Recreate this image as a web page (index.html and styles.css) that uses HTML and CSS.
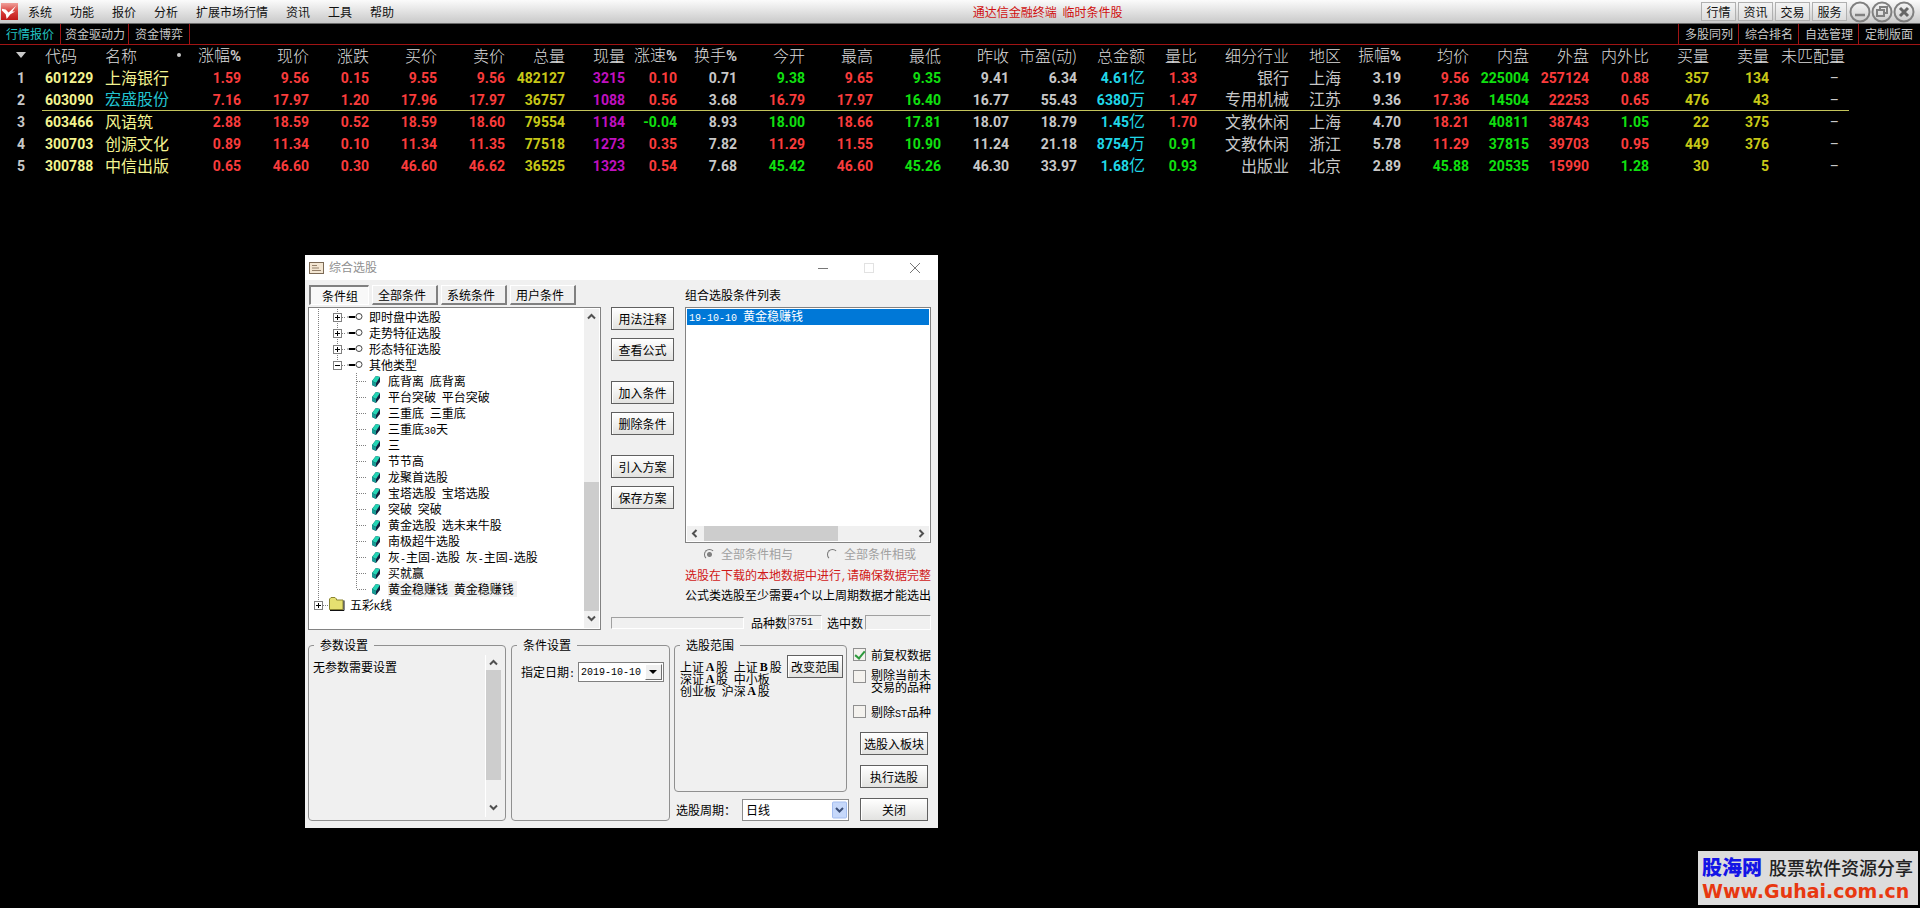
FILE: index.html
```
<!DOCTYPE html>
<html lang="zh-CN">
<head>
<meta charset="utf-8">
<title>通达信金融终端</title>
<link rel="stylesheet" href="styles.css">
</head>
<body>
<svg class="defs" aria-hidden="true">
  <defs>
    <g id="plus"><rect x="0.5" y="0.5" width="8" height="8" fill="#fff" stroke="#808080"/><path d="M2 4.5h5M4.5 2v5" stroke="#000"/></g>
    <g id="minus"><rect x="0.5" y="0.5" width="8" height="8" fill="#fff" stroke="#808080"/><path d="M2 4.5h5" stroke="#000"/></g>
    <g id="key"><path d="M0 4h10" stroke="#777"/><path d="M2 4h6" stroke="#000" stroke-width="2"/><circle cx="12" cy="3.500" r="3" fill="#fff" stroke="#444"/></g>
    <symbol id="branch" viewBox="0 0 61 16"><path d="M10.5 0v16M29.5 0v16" class="dots"/><path d="M34 8.5h4" class="dots"/><use href="#plus" x="25" y="4"/><use href="#key" x="39" y="4"/></symbol>
    <symbol id="branch-open" viewBox="0 0 61 16"><path d="M10.5 0v16M29.5 0v4" class="dots"/><path d="M34 8.5h4" class="dots"/><use href="#minus" x="25" y="4"/><use href="#key" x="39" y="4"/></symbol>
    <g id="book"><path d="M64 8l4-5 4 1v5l-4 5-4-2z" fill="#14203c"/><path d="M64 8l4-5 4 1-4 6z" fill="#24d4b4"/><path d="M64 8l4 2v4l-4-2z" fill="#189a94"/></g>
    <symbol id="leaf" viewBox="0 0 80 16"><path d="M10.5 0v16M48.5 0v16M49 8.5h10" class="dots"/><use href="#book"/></symbol>
    <symbol id="leaf-last" viewBox="0 0 80 16"><path d="M10.5 0v16M48.5 0v8M49 8.5h10" class="dots"/><use href="#book"/></symbol>
    <symbol id="root" viewBox="0 0 42 16"><path d="M10.5 0v4M15 8.5h6" class="dots"/><use href="#plus" x="6" y="4"/><path d="M21.500 4v-2l1.500-1.500h4l1.500 1.500v1h6.500v9.500h-13.500z" fill="#e6e070" stroke="#8a8430"/><path d="M22 13.500h14v-10" fill="none" stroke="#111"/></symbol>
    <symbol id="up" viewBox="0 0 15 15"><path d="M4 9.500l3.500-3.500 3.500 3.500" fill="none" stroke="#505050" stroke-width="2"/></symbol>
    <symbol id="down" viewBox="0 0 15 15"><path d="M4 5.500l3.500 3.500 3.500-3.500" fill="none" stroke="#505050" stroke-width="2"/></symbol>
    <symbol id="left" viewBox="0 0 15 15"><path d="M9.500 4l-3.500 3.500 3.500 3.500" fill="none" stroke="#505050" stroke-width="2"/></symbol>
    <symbol id="right" viewBox="0 0 15 15"><path d="M5.500 4l3.500 3.500-3.500 3.500" fill="none" stroke="#505050" stroke-width="2"/></symbol>
    <linearGradient id="red" x1="0" y1="0" x2="0" y2="1"><stop offset="0" stop-color="#f0a09a"/><stop offset="0.500" stop-color="#d8403c"/><stop offset="1" stop-color="#c01818"/></linearGradient>
  </defs>
</svg>

<header class="menubar">
  <svg class="logo" viewBox="0 0 18 18"><rect width="18" height="18" fill="url(#red)"/><path d="M1 6l4 1 3 3 8-7-4 6 3 0-5 3-4 5-1-5-4-4z" fill="#fff"/></svg>
  <nav class="menu">
    <a href="#">系统</a><a href="#">功能</a><a href="#">报价</a><a href="#">分析</a><a href="#">扩展市场行情</a><a href="#">资讯</a><a href="#">工具</a><a href="#">帮助</a>
  </nav>
  <h1 class="app-title">通达信金融终端 <em></em>临时条件股</h1>
  <div class="quick">
    <button>行情</button><button>资讯</button><button>交易</button><button>服务</button>
  </div>
  <div class="win-ctl">
    <button aria-label="最小化"><svg viewBox="0 0 22 22"><circle cx="11" cy="11" r="9.500"/><path d="M6 14h10" stroke-width="2.500"/></svg></button>
    <button aria-label="还原"><svg viewBox="0 0 22 22"><circle cx="11" cy="11" r="9.500"/><path d="M9 9V6h7v6h-3" stroke-width="2"/><rect x="6" y="9" width="7" height="6" stroke-width="2"/></svg></button>
    <button aria-label="关闭"><svg viewBox="0 0 22 22"><circle cx="11" cy="11" r="9.500"/><path d="M7 7l8 8M15 7l-8 8" stroke-width="3" stroke="#666"/></svg></button>
  </div>
</header>

<nav class="subbar">
  <div class="subtabs"><a href="#" class="on">行情报价</a><a href="#" class="tight">资金驱动力</a><a href="#">资金博弈</a></div>
  <div class="subtabs right"><a href="#">多股同列</a><a href="#">综合排名</a><a href="#">自选管理</a><a href="#">定制版面</a></div>
</nav>

<main class="desk">
<table class="quotes">
  <colgroup>
    <col class="w42"><col class="w60"><col class="w83"><col class="w60"><col class="w68"><col class="w60"><col class="w68"><col class="w68"><col class="w60"><col class="w60"><col class="w52"><col class="w60"><col class="w68"><col class="w68"><col class="w68"><col class="w68"><col class="w68"><col class="w68"><col class="w52"><col class="w92"><col class="w52"><col class="w60"><col class="w68"><col class="w60"><col class="w60"><col class="w60"><col class="w60"><col class="w60"><col class="w76">
  </colgroup>
  <thead>
    <tr><th><svg class="sort" viewBox="0 0 10 6"><path d="M0 0h10l-5 6z" fill="#c8c8c8"/></svg></th><th>代码</th><th><span class="name-head"><span>名称</span><i></i></span></th><th>涨幅<b>%</b></th><th>现价</th><th>涨跌</th><th>买价</th><th>卖价</th><th>总量</th><th>现量</th><th>涨速<b>%</b></th><th>换手<b>%</b></th><th>今开</th><th>最高</th><th>最低</th><th>昨收</th><th>市盈(动)</th><th>总金额</th><th>量比</th><th>细分行业</th><th>地区</th><th>振幅<b>%</b></th><th>均价</th><th>内盘</th><th>外盘</th><th>内外比</th><th>买量</th><th>卖量</th><th>未匹配量</th></tr>
  </thead>
  <tbody>
    <tr><td>1</td><td>601229</td><td>上海银行</td><td class="r">1.59</td><td class="r">9.56</td><td class="r">0.15</td><td class="r">9.55</td><td class="r">9.56</td><td class="y">482127</td><td class="p">3215</td><td class="r">0.10</td><td>0.71</td><td class="g">9.38</td><td class="r">9.65</td><td class="g">9.35</td><td>9.41</td><td>6.34</td><td class="c">4.61<span>亿</span></td><td class="r">1.33</td><td class="t">银行</td><td class="t">上海</td><td>3.19</td><td class="r">9.56</td><td class="g">225004</td><td class="r">257124</td><td class="r">0.88</td><td class="y">357</td><td class="y">134</td><td class="na">–</td></tr>
    <tr class="cur"><td>2</td><td>603090</td><td class="hl">宏盛股份</td><td class="r">7.16</td><td class="r">17.97</td><td class="r">1.20</td><td class="r">17.96</td><td class="r">17.97</td><td class="y">36757</td><td class="p">1088</td><td class="r">0.56</td><td>3.68</td><td class="r">16.79</td><td class="r">17.97</td><td class="g">16.40</td><td>16.77</td><td>55.43</td><td class="c">6380<span>万</span></td><td class="r">1.47</td><td class="t">专用机械</td><td class="t">江苏</td><td>9.36</td><td class="r">17.36</td><td class="g">14504</td><td class="r">22253</td><td class="r">0.65</td><td class="y">476</td><td class="y">43</td><td class="na">–</td></tr>
    <tr><td>3</td><td>603466</td><td>风语筑</td><td class="r">2.88</td><td class="r">18.59</td><td class="r">0.52</td><td class="r">18.59</td><td class="r">18.60</td><td class="y">79554</td><td class="p">1184</td><td class="g">-0.04</td><td>8.93</td><td class="g">18.00</td><td class="r">18.66</td><td class="g">17.81</td><td>18.07</td><td>18.79</td><td class="c">1.45<span>亿</span></td><td class="r">1.70</td><td class="t">文教休闲</td><td class="t">上海</td><td>4.70</td><td class="r">18.21</td><td class="g">40811</td><td class="r">38743</td><td class="g">1.05</td><td class="y">22</td><td class="y">375</td><td class="na">–</td></tr>
    <tr><td>4</td><td>300703</td><td>创源文化</td><td class="r">0.89</td><td class="r">11.34</td><td class="r">0.10</td><td class="r">11.34</td><td class="r">11.35</td><td class="y">77518</td><td class="p">1273</td><td class="r">0.35</td><td>7.82</td><td class="r">11.29</td><td class="r">11.55</td><td class="g">10.90</td><td>11.24</td><td>21.18</td><td class="c">8754<span>万</span></td><td class="g">0.91</td><td class="t">文教休闲</td><td class="t">浙江</td><td>5.78</td><td class="r">11.29</td><td class="g">37815</td><td class="r">39703</td><td class="r">0.95</td><td class="y">449</td><td class="y">376</td><td class="na">–</td></tr>
    <tr><td>5</td><td>300788</td><td>中信出版</td><td class="r">0.65</td><td class="r">46.60</td><td class="r">0.30</td><td class="r">46.60</td><td class="r">46.62</td><td class="y">36525</td><td class="p">1323</td><td class="r">0.54</td><td>7.68</td><td class="g">45.42</td><td class="r">46.60</td><td class="g">45.26</td><td>46.30</td><td>33.97</td><td class="c">1.68<span>亿</span></td><td class="g">0.93</td><td class="t">出版业</td><td class="t">北京</td><td>2.89</td><td class="g">45.88</td><td class="g">20535</td><td class="r">15990</td><td class="g">1.28</td><td class="y">30</td><td class="y">5</td><td class="na">–</td></tr>
  </tbody>
</table>
</main>

<section class="dialog" role="dialog" aria-labelledby="dlg-title">
  <header class="dlg-bar">
    <svg class="dlg-icon" viewBox="0 0 15 12"><rect x="0.500" y="0.500" width="14" height="11" fill="#f3e6d2" stroke="#7c6a55"/><path d="M3 3.500h5M3 6h7M3 8.500h9" stroke="#94806a"/></svg>
    <h2 id="dlg-title">综合选股</h2>
    <button aria-label="最小化"><svg viewBox="0 0 12 12"><path d="M1 6.500h10" stroke="#777"/></svg></button>
    <button aria-label="最大化" disabled><svg viewBox="0 0 12 12"><rect x="1.500" y="1.500" width="9" height="9" fill="none" stroke="#e2e2e2"/></svg></button>
    <button aria-label="关闭"><svg viewBox="0 0 12 12"><path d="M1 1l10 10M11 1L1 11" stroke="#777"/></svg></button>
  </header>
  <div class="dlg-body">
    <div class="upper">
      <div class="tree-col">
        <div class="tabs" role="tablist"><button role="tab" class="active">条件组</button><button role="tab">全部条件</button><button role="tab">系统条件</button><button role="tab">用户条件</button></div>
        <div class="tree-box">
          <ul class="tree">
            <li><svg class="n1"><use href="#branch"/></svg><span>即时盘中选股</span></li>
            <li><svg class="n1"><use href="#branch"/></svg><span>走势特征选股</span></li>
            <li><svg class="n1"><use href="#branch"/></svg><span>形态特征选股</span></li>
            <li><svg class="n1"><use href="#branch-open"/></svg><span>其他类型</span></li>
            <li><svg class="n2"><use href="#leaf"/></svg><span>底背离 <em></em>底背离</span></li>
            <li><svg class="n2"><use href="#leaf"/></svg><span>平台突破 <em></em>平台突破</span></li>
            <li><svg class="n2"><use href="#leaf"/></svg><span>三重底 <em></em>三重底</span></li>
            <li><svg class="n2"><use href="#leaf"/></svg><span>三重底<code>30</code>天</span></li>
            <li><svg class="n2"><use href="#leaf"/></svg><span>三</span></li>
            <li><svg class="n2"><use href="#leaf"/></svg><span>节节高</span></li>
            <li><svg class="n2"><use href="#leaf"/></svg><span>龙聚首选股</span></li>
            <li><svg class="n2"><use href="#leaf"/></svg><span>宝塔选股 <em></em>宝塔选股</span></li>
            <li><svg class="n2"><use href="#leaf"/></svg><span>突破 <em></em>突破</span></li>
            <li><svg class="n2"><use href="#leaf"/></svg><span>黄金选股 <em></em>选未来牛股</span></li>
            <li><svg class="n2"><use href="#leaf"/></svg><span>南极超牛选股</span></li>
            <li><svg class="n2"><use href="#leaf"/></svg><span>灰<code>-</code>主固<code>-</code>选股 <em></em>灰<code>-</code>主固<code>-</code>选股</span></li>
            <li><svg class="n2"><use href="#leaf"/></svg><span>买就赢</span></li>
            <li><svg class="n2"><use href="#leaf-last"/></svg><span class="sel">黄金稳赚钱 <em></em>黄金稳赚钱</span></li>
            <li><svg class="n0"><use href="#root"/></svg><span>五彩<code>K</code>线</span></li>
          </ul>
          <div class="vscroll tree-scroll"><svg><use href="#up"/></svg><i></i><svg><use href="#down"/></svg></div>
        </div>
      </div>
      <div class="side">
        <div class="side-top">
          <div class="actions">
            <button class="btn">用法注释</button><button class="btn near">查看公式</button>
            <button class="btn far">加入条件</button><button class="btn near">删除条件</button>
            <button class="btn far">引入方案</button><button class="btn near">保存方案</button>
          </div>
          <div class="list-col">
            <h3>组合选股条件列表</h3>
            <div class="list-box">
              <ul><li><code>19-10-10 </code>黄金稳赚钱</li></ul>
              <div class="hscroll"><svg><use href="#left"/></svg><i></i><svg><use href="#right"/></svg></div>
            </div>
            <div class="radios">
              <label><input type="radio" name="mode" checked disabled>全部条件相与</label>
              <label><input type="radio" name="mode" disabled>全部条件相或</label>
            </div>
            <p class="warn">选股在下载的本地数据中进行<code>,</code>请确保数据完整</p>
            <p>公式类选股至少需要<code>4</code>个以上周期数据才能选出</p>
          </div>
        </div>
        <div class="status">
          <div class="sunken bar"></div>
          <label for="total">品种数</label><input id="total" class="sunken total" value="3751" readonly>
          <label for="hit">选中数</label><input id="hit" class="sunken hit" readonly>
        </div>
      </div>
    </div>

    <div class="lower">
      <fieldset class="fs-param"><legend>参数设置</legend>
        <div class="param"><p>无参数需要设置</p>
          <div class="vscroll param-scroll"><svg><use href="#up"/></svg><i></i><svg><use href="#down"/></svg></div></div>
      </fieldset>
      <fieldset class="fs-date"><legend>条件设置</legend>
        <div class="date-row"><label for="date">指定日期<code>:</code></label>
          <div class="date"><input id="date" value="2019-10-10"><button aria-label="选择日期"><svg viewBox="0 0 8 4"><path d="M0 0h8l-4 4z"/></svg></button></div></div>
      </fieldset>
      <div class="range-col">
        <fieldset class="fs-range"><legend>选股范围</legend>
          <div class="range"><p>上证<b>A</b>股 <em></em>上证<b>B</b>股<br>深证<b>A</b>股 <em></em>中小板<br>创业板 <em></em>沪深<b>A</b>股</p>
            <button class="btn">改变范围</button></div>
        </fieldset>
        <div class="period"><label for="period">选股周期：</label>
          <div class="combo"><select id="period"><option>日线</option></select><svg viewBox="0 0 15 17"><rect x="0.500" y="0.500" width="14" height="16" rx="1" fill="#c6d8fa" stroke="#a3bdf0"/><path d="M4 6.500l3.500 3.500 3.500-3.500" fill="none" stroke="#3b4f78" stroke-width="2"/></svg></div></div>
      </div>
      <div class="opts">
        <label><input type="checkbox" checked><span>前复权数据</span></label>
        <label class="two"><input type="checkbox"><span>剔除当前未<br>交易的品种</span></label>
        <label><input type="checkbox"><span>剔除<code>ST</code>品种</span></label>
        <div class="opt-btns"><button class="btn">选股入板块</button><button class="btn">执行选股</button><button class="btn">关闭</button></div>
      </div>
    </div>
  </div>
</section>

<aside class="mark">
  <div><strong>股海网</strong><span>股票软件资源分享</span></div>
  <a href="#">Www.Guhai.com.cn</a>
</aside>
</body>
</html>
```
FILE: styles.css
```
* { box-sizing: border-box; }
body {
  margin: 0;
  min-height: 100vh;
  background: #000;
  color: #c8c8c8;
  font-family: "Noto Sans CJK SC", sans-serif;
  font-size: 12px;
  line-height: 16px;
  position: relative;
  overflow: hidden;
}
a { color: inherit; text-decoration: none; }
button, input, select { font: inherit; color: inherit; margin: 0; padding: 0; }
h1, h2, h3, p, ul { margin: 0; padding: 0; font-size: 12px; font-weight: 400; list-style: none; }
code { font-family: "Liberation Mono", monospace; font-size: 10px; line-height: 1; }
em { display: inline-block; width: 3px; }
.defs { position: absolute; width: 0; height: 0; }
.dots { fill: none; stroke: #808080; stroke-dasharray: 1 1; }

/* menu bar */
.menubar {
  display: flex;
  align-items: center;
  height: 24px;
  padding: 0 5px 0 1px;
  background: linear-gradient(#fbfbfb, #c9c9c9);
  border-bottom: 1px solid #6a6a6a;
  color: #111;
  white-space: nowrap;
}
.logo { width: 17px; height: 17px; }
.menu { display: flex; gap: 18px; margin-left: 10px; }
.app-title { flex: 1; text-align: center; color: #d01010; }
.quick { display: flex; gap: 2px; }
.quick button {
  width: 35px;
  height: 19px;
  border: 1px solid #b0b0b0;
  background: linear-gradient(#f4f4f4, #dcdcdc);
  line-height: 16px;
}
.win-ctl { display: flex; margin-left: 2px; }
.win-ctl button { width: 22px; height: 22px; border: 0; background: none; }
.win-ctl svg { display: block; fill: none; stroke: #808080; stroke-width: 2; }

/* sub tabs */
.subbar {
  display: flex;
  justify-content: space-between;
  height: 21px;
  border-bottom: 1px solid #a01414;
  line-height: 20px;
  white-space: nowrap;
}
.subtabs { display: flex; }
.subtabs a { padding: 0 6px; border-right: 1px solid #a01414; }
.subtabs .on { color: #22c3c3; }
.subtabs .tight { padding: 0 3px 0 4px; }
.subtabs.right { margin-right: 2px; }
.subtabs.right a { padding: 0 5px 0 6px; border-right: 0; border-left: 1px solid #a01414; }

/* quotes */
.quotes { table-layout: fixed; width: 0; border-collapse: separate; border-spacing: 0; }
.w42 { width: 42px; } .w52 { width: 52px; } .w60 { width: 60px; } .w68 { width: 68px; }
.w76 { width: 76px; } .w83 { width: 83px; } .w92 { width: 92px; }
.quotes th, .quotes td { height: 22px; padding: 0 4px 0 0; text-align: right; white-space: nowrap; }
.quotes th { font-size: 16px; font-weight: 300; color: #dcdcdc; line-height: 18px; padding-bottom: 3px; }
.quotes th b { font: bold 15px/1 Roboto, sans-serif; color: #c8c8c8; }
.quotes td { font: bold 14px/20px Roboto, sans-serif; }
.quotes th:first-child, .quotes td:first-child { text-align: center; padding-left: 0; padding-right: 0; }
.quotes th:nth-child(2), .quotes td:nth-child(2), .quotes th:nth-child(3), .quotes td:nth-child(3) { text-align: left; padding-left: 3px; }
.quotes td:nth-child(2), .quotes td:nth-child(3) { color: #f4f490; }
.quotes td:nth-child(3), .quotes td.t { font: 400 16px/18px "Noto Sans CJK SC", sans-serif; padding-bottom: 3px; }
.quotes td span { font: 400 16px/1 "Noto Sans CJK SC", sans-serif; }
.quotes .hl:nth-child(3) { color: #22c3d0; }
.quotes td.na { padding-right: 10px; font-weight: 400; }
.quotes .cur td { border-bottom: 1px solid #c4c45a; }
.quotes .cur td:first-child { border-bottom: 0; }
.r { color: #fa3c3c; } .g { color: #10e010; } .y { color: #c8c818; } .p { color: #c010c0; } .c { color: #20d8e8; }
.sort { width: 10px; height: 6px; display: block; margin: auto; }
.name-head { display: flex; justify-content: space-between; align-items: center; }
.name-head i { width: 4px; height: 4px; border-radius: 2px; background: #c8c8c8; }

/* dialog */
.dialog {
  position: absolute;
  left: 305px;
  top: 255px;
  width: 633px;
  background: #f0f0f0;
  color: #000;
}
.dlg-bar { display: flex; align-items: center; height: 25px; padding-left: 4px; background: #fff; }
.dlg-icon { width: 15px; height: 12px; }
.dlg-bar h2 { flex: 1; margin-left: 5px; padding-bottom: 2px; color: #909090; }
.dlg-bar button { width: 46px; height: 24px; border: 0; background: none; display: flex; align-items: center; justify-content: center; }
.dlg-bar button svg { width: 12px; height: 12px; }
.dlg-body { padding: 5px 7px 7px 3px; }
.upper { display: flex; gap: 10px; }
.tree-col { width: 293px; flex: none; }
.tabs { display: flex; gap: 3px; padding-left: 1px; height: 20px; margin-bottom: 2px; }
.tabs button {
  width: 66px;
  text-align: left;
  padding-left: 5px;
  background: #f0f0f0;
  border: 1px solid #fff;
  border-right: 2px solid #808080;
  border-bottom: 2px solid #808080;
}
.tabs .active { width: 60px; padding-left: 11px; background: #f8f8f8; border: 1px solid #fff; border-top: 2px solid #808080; border-left: 2px solid #808080; }
.tree-box { display: flex; height: 323px; border: 1px solid #828282; background: #fff; padding: 1px; }
.tree { flex: 1; margin-left: -2px; }
.tree li { display: flex; height: 16px; white-space: nowrap; }
.tree svg { height: 16px; flex: none; }
.n0 { width: 42px; } .n1 { width: 61px; } .n2 { width: 80px; }
.tree .sel { background: #f0f0f0; padding-right: 3px; }
.vscroll { width: 15px; display: flex; flex-direction: column; align-items: center; background: #f0f0f0; }
.vscroll svg, .hscroll svg { width: 15px; height: 15px; flex: none; }
.vscroll i, .hscroll i { background: #cdcdcd; }
.vscroll i { width: 15px; }
.tree-scroll i { height: 129px; margin-top: auto; }
.tree-scroll svg:last-child { margin-bottom: 2px; }
.side { flex: 1; min-width: 0; display: flex; flex-direction: column; justify-content: space-between; }
.side-top { display: flex; gap: 11px; }
.actions { width: 63px; padding-top: 22px; display: flex; flex-direction: column; }
.btn {
  height: 23px;
  border: 1px solid #606060;
  background: linear-gradient(#fff, #e2e2e0);
  box-shadow: inset 1px 1px #fff;
  line-height: 20px;
  white-space: nowrap;
}
.btn.near { margin-top: 8px; }
.btn.far { margin-top: 20px; }
.list-col { flex: 1; min-width: 0; white-space: nowrap; }
.list-col h3 { height: 22px; line-height: 20px; }
.list-box { height: 236px; display: flex; flex-direction: column; justify-content: space-between; border: 1px solid #828282; padding: 1px; background: #fff; }
.list-box li { height: 16px; background: #0078d7; color: #fff; padding-left: 2px; line-height: 14px; }
.list-box code { white-space: pre; }
.hscroll { display: flex; justify-content: space-between; background: #f0f0f0; height: 15px; }
.hscroll i { width: 134px; margin-right: auto; margin-left: 2px; }
.radios { display: flex; gap: 34px; height: 22px; padding-left: 19px; color: #a0a0a0; }
.radios label { display: flex; align-items: center; gap: 6px; }
.radios input { appearance: none; width: 11px; height: 11px; border: 1px solid #777; border-right-color: #eee; border-bottom-color: #eee; border-radius: 50%; background: #f0f0f0; }
.radios input:checked { background: radial-gradient(#808080 2px, #f0f0f0 3px); }
.list-col p { line-height: 20px; }
.list-col .warn { color: #d01818; }
.status { display: flex; align-items: center; height: 15px; white-space: nowrap; }
.sunken { border: 1px solid #fff; border-top-color: #a0a0a0; border-left-color: #a0a0a0; background: #f0f0f0; height: 15px; }
.status .bar { width: 133px; height: 12px; margin-right: 7px; }
.total { width: 34px; margin: 0 5px 0 1px; font: 10px "Liberation Mono", monospace; }
.status .hit { flex: 1; min-width: 0; width: 60px; margin-left: 2px; }
.status .total { flex: none; margin: 0 5px 0 1px; }

.lower { display: flex; margin-top: 7px; }
fieldset { margin: 0; padding: 0; min-width: 0; border: 1px solid #909090; border-radius: 4px; }
legend { height: 16px; margin-left: 5px; padding: 0 6px; }
.fs-param { width: 198px; margin-right: 5px; }
.param { display: flex; justify-content: space-between; height: 167px; padding: 2px 4px 3px; }
.param p { padding-top: 4px; }
.param-scroll { box-shadow: -1px 0 #fff; }
.param-scroll i { height: 110px; }
.param-scroll svg:last-child { margin-top: auto; margin-bottom: 2px; }
.fs-date { width: 159px; margin-right: 4px; }
.date-row { display: flex; align-items: center; justify-content: space-between; padding: 9px 5px 0 9px; white-space: nowrap; }
.date { display: flex; width: 86px; height: 20px; border: 1px solid #808080; background: #fff; padding: 1px; }
.date input { flex: 1; min-width: 0; width: 60px; border: 0; padding-left: 1px; font: 10px "Liberation Mono", monospace; background: none; }
.date button { width: 17px; border: 1px solid #fff; border-right-color: #707070; border-bottom-color: #707070; background: #f0f0f0; }
.date svg { width: 8px; height: 4px; display: block; margin: auto; }
.range-col { width: 175px; margin-right: 4px; }
.fs-range { width: 173px; height: 155px; }
.range { display: flex; justify-content: space-between; padding: 2px 3px 0 5px; white-space: nowrap; }
.range p { line-height: 12px; padding-top: 6px; }
.range b { display: inline-block; width: 12px; text-align: center; vertical-align: bottom; font: bold 12px/12px "Liberation Serif", serif; }
.range .btn { width: 56px; margin-left: -4px; flex: none; }
.period { display: flex; align-items: center; justify-content: space-between; padding: 7px 0 0 2px; white-space: nowrap; }
.combo { position: relative; width: 107px; height: 22px; }
.combo select { appearance: none; width: 100%; height: 22px; padding: 0 18px 0 3px; border: 1px solid #8c8c8c; border-radius: 0; background: #fff; }
.combo svg { position: absolute; right: 2px; top: 2px; width: 15px; height: 18px; pointer-events: none; }
.opts { flex: 1; padding-top: 10px; white-space: nowrap; }
.opts label { display: flex; gap: 5px; height: 22px; }
.opts label.two { height: 35px; line-height: 12px; }
.opts input { appearance: none; position: relative; flex: none; width: 13px; height: 13px; margin-top: 1px; border: 1px solid #909090; background: #f4f2ee; }
.opts input:checked::after { content: ""; position: absolute; left: 3px; top: 0; width: 4px; height: 8px; border: solid #2c9a3c; border-width: 0 2px 2px 0; transform: rotate(40deg); }
.opt-btns { display: flex; flex-direction: column; gap: 10px; width: 68px; margin: 6px 0 0 7px; }

/* corner mark */
.mark {
  position: absolute;
  right: 2px;
  bottom: 3px;
  width: 220px;
  height: 54px;
  padding: 3px 4px;
  background: #dcdcdc;
  white-space: nowrap;
}
.mark div { display: flex; align-items: center; gap: 7px; height: 26px; }
.mark strong { color: #1414e6; font-size: 20px; font-weight: 900; }
.mark span { color: #222; font-size: 18px; font-weight: 500; }
.mark a { display: block; color: #e83810; font: bold 19px/22px "DejaVu Sans", sans-serif; }
```
